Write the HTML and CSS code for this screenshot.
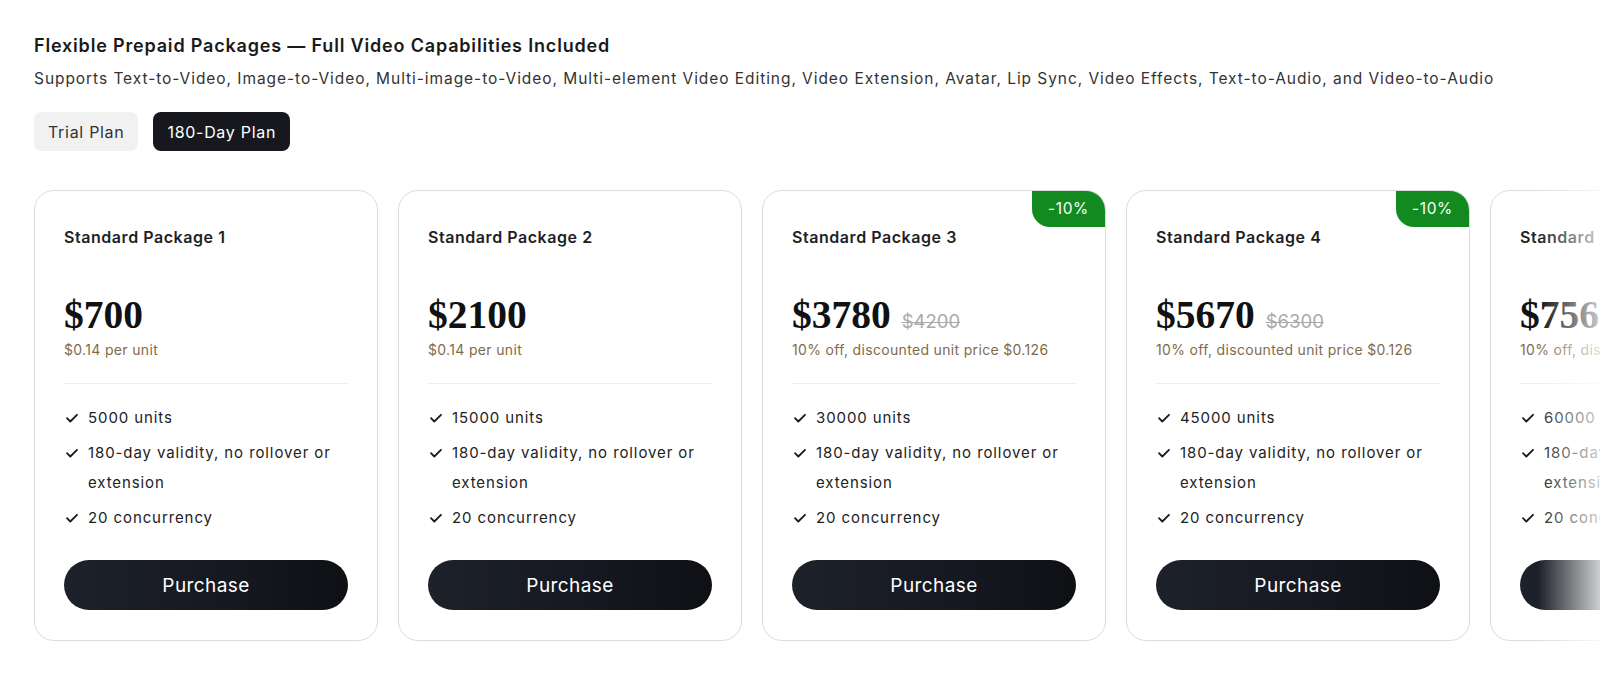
FILE: index.html
```html
<!DOCTYPE html>
<html lang="en">
<head>
<meta charset="utf-8">
<title>Flexible Prepaid Packages</title>
<link rel="stylesheet" href="styles.css">
</head>
<body>
<main class="page">
  <h1 class="title">Flexible Prepaid Packages — Full Video Capabilities Included</h1>
  <p class="subtitle">Supports Text-to-Video, Image-to-Video, Multi-image-to-Video, Multi-element Video Editing, Video Extension, Avatar, Lip Sync, Video Effects, Text-to-Audio, and Video-to-Audio</p>
  <div class="tabs">
    <button class="tab">Trial Plan</button>
    <button class="tab active">180-Day Plan</button>
  </div>
  <div class="cards-wrap">
    <div class="cards">
      <section class="card">
        <h2 class="card-title">Standard Package 1</h2>
        <div class="price-row"><span class="price">$700</span></div>
        <p class="unit">$0.14 per unit</p>
        <hr class="divider">
        <ul class="features">
          <li><svg class="check" viewBox="0 0 16 16"><path d="M3 8.2l3.3 3.3L13 4.8"/></svg><span>5000 units</span></li>
          <li><svg class="check" viewBox="0 0 16 16"><path d="M3 8.2l3.3 3.3L13 4.8"/></svg><span>180-day validity, no rollover or extension</span></li>
          <li><svg class="check" viewBox="0 0 16 16"><path d="M3 8.2l3.3 3.3L13 4.8"/></svg><span>20 concurrency</span></li>
        </ul>
        <button class="buy">Purchase</button>
      </section>
      <section class="card">
        <h2 class="card-title">Standard Package 2</h2>
        <div class="price-row"><span class="price">$2100</span></div>
        <p class="unit">$0.14 per unit</p>
        <hr class="divider">
        <ul class="features">
          <li><svg class="check" viewBox="0 0 16 16"><path d="M3 8.2l3.3 3.3L13 4.8"/></svg><span>15000 units</span></li>
          <li><svg class="check" viewBox="0 0 16 16"><path d="M3 8.2l3.3 3.3L13 4.8"/></svg><span>180-day validity, no rollover or extension</span></li>
          <li><svg class="check" viewBox="0 0 16 16"><path d="M3 8.2l3.3 3.3L13 4.8"/></svg><span>20 concurrency</span></li>
        </ul>
        <button class="buy">Purchase</button>
      </section>
      <section class="card">
        <span class="badge">-10%</span>
        <h2 class="card-title">Standard Package 3</h2>
        <div class="price-row"><span class="price">$3780</span><s class="old">$4200</s></div>
        <p class="unit">10% off, discounted unit price $0.126</p>
        <hr class="divider">
        <ul class="features">
          <li><svg class="check" viewBox="0 0 16 16"><path d="M3 8.2l3.3 3.3L13 4.8"/></svg><span>30000 units</span></li>
          <li><svg class="check" viewBox="0 0 16 16"><path d="M3 8.2l3.3 3.3L13 4.8"/></svg><span>180-day validity, no rollover or extension</span></li>
          <li><svg class="check" viewBox="0 0 16 16"><path d="M3 8.2l3.3 3.3L13 4.8"/></svg><span>20 concurrency</span></li>
        </ul>
        <button class="buy">Purchase</button>
      </section>
      <section class="card">
        <span class="badge">-10%</span>
        <h2 class="card-title">Standard Package 4</h2>
        <div class="price-row"><span class="price">$5670</span><s class="old">$6300</s></div>
        <p class="unit">10% off, discounted unit price $0.126</p>
        <hr class="divider">
        <ul class="features">
          <li><svg class="check" viewBox="0 0 16 16"><path d="M3 8.2l3.3 3.3L13 4.8"/></svg><span>45000 units</span></li>
          <li><svg class="check" viewBox="0 0 16 16"><path d="M3 8.2l3.3 3.3L13 4.8"/></svg><span>180-day validity, no rollover or extension</span></li>
          <li><svg class="check" viewBox="0 0 16 16"><path d="M3 8.2l3.3 3.3L13 4.8"/></svg><span>20 concurrency</span></li>
        </ul>
        <button class="buy">Purchase</button>
      </section>
      <section class="card">
        <span class="badge">-10%</span>
        <h2 class="card-title">Standard Package 5</h2>
        <div class="price-row"><span class="price">$7560</span><s class="old">$8400</s></div>
        <p class="unit">10% off, discounted unit price $0.126</p>
        <hr class="divider">
        <ul class="features">
          <li><svg class="check" viewBox="0 0 16 16"><path d="M3 8.2l3.3 3.3L13 4.8"/></svg><span>60000 units</span></li>
          <li><svg class="check" viewBox="0 0 16 16"><path d="M3 8.2l3.3 3.3L13 4.8"/></svg><span>180-day validity, no rollover or extension</span></li>
          <li><svg class="check" viewBox="0 0 16 16"><path d="M3 8.2l3.3 3.3L13 4.8"/></svg><span>20 concurrency</span></li>
        </ul>
        <button class="buy">Purchase</button>
      </section>
    </div>
    <div class="fade"></div>
  </div>
</main>
</body>
</html>
```
FILE: styles.css
```css
* { box-sizing: border-box; }
html, body { margin: 0; padding: 0; background: #fff; }
body {
  font-family: Inter, "Noto Sans", "Liberation Sans", sans-serif;
  color: #1a1a1a;
  width: 1600px;
  height: 690px;
  overflow: hidden;
}
.page { padding: 34px 0 0 34px; }
.title {
  margin: 0;
  font-size: 18px;
  line-height: 24px;
  font-weight: 600;
  letter-spacing: 0.82px;
  color: #1a1a1a;
}
.subtitle {
  margin: 10px 0 0;
  font-size: 15.5px;
  line-height: 22px;
  letter-spacing: 0.94px;
  color: #333;
  white-space: nowrap;
}
.tabs { display: flex; gap: 15px; margin-top: 22px; }
.tab {
  font-family: inherit;
  font-size: 16px;
  letter-spacing: 0.7px;
  height: 39px;
  padding: 0 14px;
  border: none;
  border-radius: 8px;
  background: #f1f1f1;
  color: #333;
}
.tab.active { background: #16181d; color: #fff; }
.cards-wrap { position: relative; margin-top: 39px; }
.cards { display: flex; gap: 20px; overflow: hidden; }
.card {
  position: relative;
  flex: 0 0 344px;
  height: 451px;
  border: 1px solid #dcdcdc;
  border-radius: 20px;
  padding: 35px 29px 0;
  display: flex;
  flex-direction: column;
  overflow: hidden;
}
.badge {
  position: absolute;
  top: 0;
  right: 0;
  width: 73px;
  height: 36px;
  background: #138a1f;
  color: #fff;
  font-size: 15.5px;
  letter-spacing: 0.6px;
  line-height: 36px;
  text-align: center;
  border-bottom-left-radius: 18px;
}
.card-title {
  margin: 0;
  font-size: 16px;
  line-height: 22px;
  font-weight: 600;
  letter-spacing: 0.55px;
  color: #1f1f1f;
}
.price-row {
  margin-top: 45px;
  display: flex;
  align-items: baseline;
  gap: 11px;
  height: 44px;
}
.price {
  font-family: "Liberation Serif", "Times New Roman", serif;
  font-weight: 700;
  font-size: 39.5px;
  line-height: 44px;
  color: #111;
}
.old {
  font-size: 18.5px;
  color: #aaa;
  text-decoration-thickness: 1px;
}
.unit {
  margin: 3px 0 0;
  font-size: 14px;
  line-height: 20px;
  letter-spacing: 0.33px;
  color: #7f6b4c;
  white-space: nowrap;
}
.divider {
  margin: 23px 0 0;
  border: none;
  border-top: 1px solid #eee;
}
.features {
  list-style: none;
  margin: 19px 0 0;
  padding: 0;
  display: flex;
  flex-direction: column;
  gap: 5px;
}
.features li {
  display: flex;
  align-items: flex-start;
  gap: 8px;
  font-size: 15px;
  line-height: 30px;
  letter-spacing: 0.9px;
  color: #222;
}
.check {
  flex: 0 0 16px;
  width: 16px;
  height: 16px;
  margin-top: 7px;
  fill: none;
  stroke: #1a1a1a;
  stroke-width: 1.8;
  stroke-linecap: round;
  stroke-linejoin: round;
}
.buy {
  margin-top: 27px;
  height: 50px;
  border: none;
  border-radius: 25px;
  background: linear-gradient(90deg, #1d212a 0%, #151820 60%, #0f1014 100%);
  color: #fff;
  font-family: inherit;
  font-size: 19px;
  letter-spacing: 0.4px;
}
.fade {
  position: absolute;
  top: 0;
  right: 0;
  width: 62px;
  height: 100%;
  background: linear-gradient(90deg, rgba(255,255,255,0) 0%, rgba(255,255,255,0.78) 100%);
  pointer-events: none;
}
```
